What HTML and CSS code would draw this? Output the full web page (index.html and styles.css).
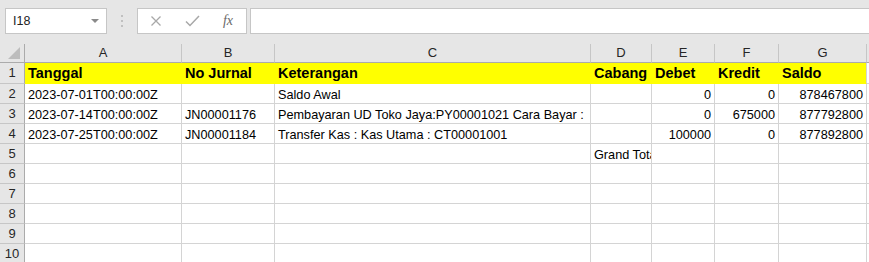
FILE: index.html
```html
<!DOCTYPE html>
<html lang="id">
<head>
    <meta charset="UTF-8">
    <title>Buku Besar</title>
    <link rel="stylesheet" href="styles.css">
</head>
<body>

<div class="ribbon">
    <div class="name-box"><span>I18</span><span class="caret"></span></div>
    <div class="grip">
        <svg width="4" height="14" viewBox="0 0 4 14"><circle cx="2" cy="2" r="1" fill="#b3b3b3"/><circle cx="2" cy="7" r="1" fill="#b3b3b3"/><circle cx="2" cy="12" r="1" fill="#b3b3b3"/></svg>
    </div>
    <div class="fx-tools">
        <span class="tool"><svg width="12" height="12" viewBox="0 0 12 12"><path d="M1.5 1.5 L10.5 10.5 M10.5 1.5 L1.5 10.5" stroke="#a8a8a8" stroke-width="1.3" fill="none"/></svg></span>
        <span class="tool"><svg width="15" height="12" viewBox="0 0 15 12"><path d="M1 6.5 L5 10.5 L14 1" stroke="#a8a8a8" stroke-width="1.5" fill="none"/></svg></span>
        <span class="tool fx">fx</span>
    </div>
    <div class="formula"></div>
</div>

<div class="sheet">
    <!-- header kolom -->
    <div class="hd corner"><svg width="14" height="14" viewBox="0 0 14 14"><polygon points="13,1 13,13 1,13" fill="#bdbdbd"/></svg></div>
    <div class="hd col">A</div>
    <div class="hd col">B</div>
    <div class="hd col">C</div>
    <div class="hd col">D</div>
    <div class="hd col">E</div>
    <div class="hd col">F</div>
    <div class="hd col">G</div>
    <div class="hd col end"></div>

    <!-- baris 1 -->
    <div class="rn">1</div>
    <div class="c y">Tanggal</div>
    <div class="c y">No Jurnal</div>
    <div class="c y">Keterangan</div>
    <div class="c y">Cabang</div>
    <div class="c y">Debet</div>
    <div class="c y">Kredit</div>
    <div class="c y last">Saldo</div>
    <div class="c"></div>

    <!-- baris 2 -->
    <div class="rn">2</div>
    <div class="c">2023-07-01T00:00:00Z</div>
    <div class="c"></div>
    <div class="c">Saldo Awal</div>
    <div class="c"></div>
    <div class="c num">0</div>
    <div class="c num">0</div>
    <div class="c num">878467800</div>
    <div class="c"></div>

    <!-- baris 3 -->
    <div class="rn">3</div>
    <div class="c">2023-07-14T00:00:00Z</div>
    <div class="c">JN00001176</div>
    <div class="c">Pembayaran UD Toko Jaya:PY00001021 Cara Bayar :</div>
    <div class="c"></div>
    <div class="c num">0</div>
    <div class="c num">675000</div>
    <div class="c num">877792800</div>
    <div class="c"></div>

    <!-- baris 4 -->
    <div class="rn">4</div>
    <div class="c">2023-07-25T00:00:00Z</div>
    <div class="c">JN00001184</div>
    <div class="c">Transfer Kas : Kas Utama : CT00001001</div>
    <div class="c"></div>
    <div class="c num">100000</div>
    <div class="c num">0</div>
    <div class="c num">877892800</div>
    <div class="c"></div>

    <!-- baris 5 -->
    <div class="rn">5</div>
    <div class="c"></div>
    <div class="c"></div>
    <div class="c"></div>
    <div class="c">Grand Total</div>
    <div class="c"></div>
    <div class="c"></div>
    <div class="c"></div>
    <div class="c"></div>

    <div class="rn">6</div>
    <div class="c"></div><div class="c"></div><div class="c"></div><div class="c"></div><div class="c"></div><div class="c"></div><div class="c"></div><div class="c"></div>
    <div class="rn">7</div>
    <div class="c"></div><div class="c"></div><div class="c"></div><div class="c"></div><div class="c"></div><div class="c"></div><div class="c"></div><div class="c"></div>
    <div class="rn">8</div>
    <div class="c"></div><div class="c"></div><div class="c"></div><div class="c"></div><div class="c"></div><div class="c"></div><div class="c"></div><div class="c"></div>
    <div class="rn">9</div>
    <div class="c"></div><div class="c"></div><div class="c"></div><div class="c"></div><div class="c"></div><div class="c"></div><div class="c"></div><div class="c"></div>
    <div class="rn">10</div>
    <div class="c"></div><div class="c"></div><div class="c"></div><div class="c"></div><div class="c"></div><div class="c"></div><div class="c"></div><div class="c"></div>
</div>

</body>
</html>
```

FILE: styles.css
```css
body { margin: 0; background: #e6e6e6; font-family: "Liberation Sans", Arial, sans-serif; overflow: hidden; }

.ribbon { height: 44px; display: flex; align-items: flex-start; padding-top: 8px; box-sizing: border-box; }
.name-box {
    margin-left: 5px; width: 102px; height: 26px; box-sizing: border-box;
    background: #fff; border: 1px solid #c6c6c6;
    display: flex; align-items: center; justify-content: space-between;
    padding: 0 7px 0 7px; font-size: 12.5px; color: #222;
}
.caret { width: 0; height: 0; border-left: 4px solid transparent; border-right: 4px solid transparent; border-top: 4px solid #8a8a8a; }
.grip { width: 30px; height: 26px; display: flex; align-items: center; justify-content: center; }
.fx-tools {
    width: 110px; height: 26px; box-sizing: border-box; background: #fff; border: 1px solid #c6c6c6;
    display: flex; align-items: center;
}
.tool { width: 36px; display: flex; justify-content: center; align-items: center; }
.fx { font-family: "Liberation Serif", serif; font-style: italic; font-size: 14px; color: #6a6a6a; }
.formula { flex: 1; margin-left: 3px; height: 26px; box-sizing: border-box; background: #fff; border: 1px solid #c6c6c6; border-right: none; }

.sheet {
    display: grid;
    grid-template-columns: 25px 157px 93px 316px 61px 63px 64px 88px 2px;
    grid-template-rows: 19px 21px repeat(9, 20px);
    background: #fff;
}
.hd {
    background: #e6e6e6; box-sizing: border-box;
    border-bottom: 1px solid #ababab; border-right: 1px solid #c6c6c6;
    font-size: 13px; color: #262626; text-align: center; line-height: 18px;
}
.corner { border-right-color: #ababab; display: flex; align-items: flex-end; justify-content: flex-end; padding: 0 3px 2px 0; }
.col.end { border-right: none; }
.rn {
    background: #e6e6e6; box-sizing: border-box;
    border-right: 1px solid #ababab; border-bottom: 1px solid #c6c6c6;
    font-size: 13px; color: #262626; text-align: center; line-height: 20px;
}
.c {
    box-sizing: border-box; border-right: 1px solid #d4d4d4; border-bottom: 1px solid #d4d4d4;
    font-size: 12.7px; color: #000; line-height: 19px; padding: 2px 3px 0 3px;
    white-space: nowrap; overflow: hidden;
}
.c.num { text-align: right; }
.c.y {
    background: #ffff00; border-right-color: #ffff00; border-bottom-color: #ffff00;
    font-weight: bold; font-size: 14.5px; line-height: 20px; padding-top: 0;
}
.c.y.last { border-right-color: #d4d4d4; }
```
